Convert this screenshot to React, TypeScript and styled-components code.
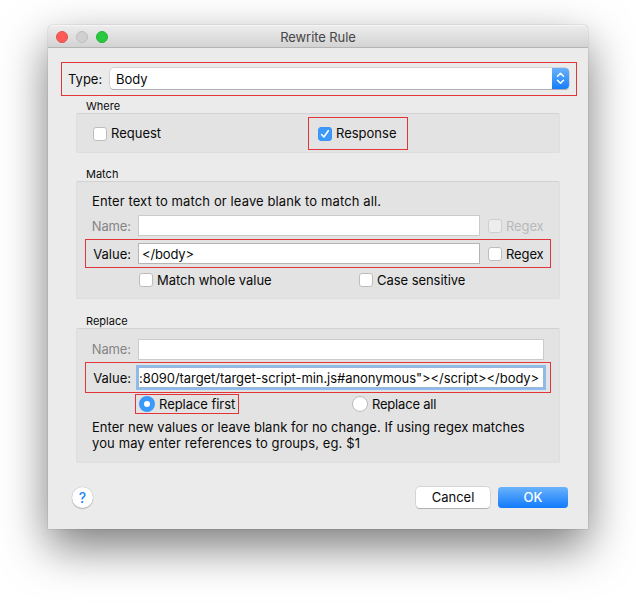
import React from "react";
import styled, { createGlobalStyle } from "styled-components";

const GlobalStyle = createGlobalStyle`
  * { box-sizing: border-box; }
  body { margin: 0; background: #fff; overflow: hidden; }
`;

const Desktop = styled.main`
  width: 636px;
  height: 603px;
  padding: 25px 48px 0;
  overflow: hidden;
  background: #fff;
  color: #0a0a0a;
  font: 13px/16px Inter, Roboto, sans-serif;
`;

const Window = styled.section`
  width: 540px;
  height: 504px;
  display: flex;
  flex-direction: column;
  background: #ebebeb;
  border-radius: 5px 5px 0 0;
  box-shadow: 0 0 1px rgba(0, 0, 0, 0.55), 0 18px 46px rgba(0, 0, 0, 0.52);
`;

const TitleBar = styled.header`
  height: 23px;
  flex: none;
  display: grid;
  grid-template-columns: 70px 1fr 70px;
  align-items: center;
  padding: 1px 0 0 8px;
  background: linear-gradient(#ececec, #d3d3d3);
  border-top: 1px solid #f6f6f6;
  border-bottom: 1px solid #b4b4b4;
  border-radius: 5px 5px 0 0;
`;

const Lights = styled.div`
  display: flex;
  gap: 8px;
`;

const Light = styled.span<{ $fill: string; $edge: string }>`
  width: 12px;
  height: 12px;
  border-radius: 50%;
  background: ${(p) => p.$fill};
  border: 1px solid ${(p) => p.$edge};
`;

const Text = styled.span<{ $track?: number; $dim?: string }>`
  white-space: nowrap;
  letter-spacing: ${(p) => p.$track ?? 0}px;
  color: ${(p) => p.$dim ?? "inherit"};
`;

const Title = styled.h1`
  margin: 0;
  padding-right: 8px;
  text-align: center;
  font-size: 13px;
  font-weight: 400;
  line-height: 16px;
  color: #464646;
`;

const TypeRow = styled.div`
  flex: none;
  width: 516px;
  height: 34px;
  margin: 14px 0 0 13px;
  padding: 0 7px 1px 6px;
  display: flex;
  align-items: center;
  justify-content: space-between;
  border: 1px solid #e2353a;
`;

const Select = styled.div`
  width: 459px;
  height: 21px;
  display: flex;
  align-items: center;
  justify-content: space-between;
  padding-left: 6px;
  background: #fff;
  border-radius: 4px;
  box-shadow: 0 0 0 0.5px #bcbcbc, 0 1px 0.5px #a3a3a3;
`;

const Stepper = styled.span`
  width: 17px;
  height: 21px;
  display: flex;
  align-items: center;
  justify-content: center;
  background: linear-gradient(#68b1fb, #157efb);
  border-radius: 0 4px 4px 0;
`;

const GroupTitle = styled.h2<{ $top: number }>`
  flex: none;
  height: 14px;
  margin: ${(p) => p.$top}px 0 0 38px;
  font-size: 11px;
  font-weight: 400;
  line-height: 14px;
`;

const Group = styled.div<{ $height: number }>`
  flex: none;
  width: 484px;
  height: ${(p) => p.$height}px;
  margin-left: 28px;
  background: #e3e3e3;
  border: 1px solid #dedede;
  border-top-color: #d2d2d2;
  border-radius: 2px;
`;

const WhereRow = styled.div`
  display: grid;
  grid-template-columns: 231px 100px;
  align-items: center;
  padding-top: 3px;

  ${Text} {
    padding-bottom: 2px;
  }
`;

const Option = styled.label<{ $gap?: number; $pad?: number }>`
  display: flex;
  align-items: center;
  gap: ${(p) => p.$gap ?? 4}px;
  padding-left: ${(p) => p.$pad ?? 0}px;
`;

const FramedOption = styled(Option)<{ $w: number; $h: number }>`
  width: ${(p) => p.$w}px;
  height: ${(p) => p.$h}px;
  border: 1px solid #e2353a;
`;

const Box = styled.span<{ $on?: boolean; $off?: boolean }>`
  width: 14px;
  height: 14px;
  flex: none;
  display: flex;
  border-radius: 3px;
  background: ${(p) => (p.$on ? "#3b99fc" : p.$off ? "#ededed" : "#fff")};
  border: 1px solid ${(p) => (p.$on ? "#3b93f5" : p.$off ? "#cfcfcf" : "#bdbdbd")};
`;

const Radio = styled.span<{ $on?: boolean }>`
  width: 16px;
  height: 16px;
  flex: none;
  border-radius: 50%;
  background: #fff;
  border: ${(p) => (p.$on ? "5px solid #3b99fc" : "1px solid #bdbdbd")};
`;

const Note = styled.p<{ $top: number }>`
  margin: 0;
  padding: ${(p) => p.$top}px 0 0 15px;
  line-height: 16px;
`;

const FieldRow = styled.div<{ $h: number; $top?: number; $framed?: boolean }>`
  width: 466px;
  height: ${(p) => p.$h}px;
  margin: ${(p) => p.$top ?? 0}px 0 0 8px;
  display: grid;
  grid-template-columns: 45px auto 1fr;
  column-gap: 7px;
  align-items: center;
  border: 1px solid ${(p) => (p.$framed ? "#e2353a" : "transparent")};
`;

const FieldLabel = styled(Text)`
  justify-self: end;
`;

const Field = styled.div<{ $w: number; $focus?: boolean; $dim?: boolean }>`
  width: ${(p) => p.$w}px;
  height: 21px;
  padding: 1px 3px 0;
  background: #fff;
  line-height: 18px;
  border: 1px solid ${(p) => (p.$focus ? "#9cb7d6" : p.$dim ? "#cbcbcb" : "#b4b4b4")};
  box-shadow: ${(p) => (p.$focus ? "0 0 0 2px #8dbcec" : "none")};
`;

const Focused = styled(Field)`
  padding: 1px 0 0;
`;

const Choices = styled.div<{ $cols: string; $left: number; $top: number }>`
  display: grid;
  grid-template-columns: ${(p) => p.$cols};
  align-items: center;
  margin: ${(p) => p.$top}px 0 0 ${(p) => p.$left}px;
`;

const Footer = styled.footer`
  display: flex;
  align-items: center;
  padding: 24px 20px 0 24px;
`;

const Help = styled.button`
  width: 21px;
  height: 21px;
  padding: 0;
  margin: -1px auto 0 0;
  border: 0;
  border-radius: 50%;
  background: #fff;
  box-shadow: 0 0 1px #999, 0 1px 1px #b5b5b5;
  color: #1a86fb;
  font: 500 14px/21px Inter, sans-serif;
`;

const Button = styled.button<{ $primary?: boolean }>`
  width: ${(p) => (p.$primary ? 70 : 74)}px;
  height: 21px;
  padding: 0;
  margin-left: 8px;
  border: 0;
  border-radius: 4px;
  font: ${(p) => (p.$primary ? 500 : 400)} 13px/21px Inter, sans-serif;
  color: ${(p) => (p.$primary ? "#fff" : "#0a0a0a")};
  background: ${(p) => (p.$primary ? "linear-gradient(#6ab3fb, #117afc)" : "#fff")};
  box-shadow: ${(p) => (p.$primary ? "0 0 0.5px #3b86dd" : "0 0 0 0.5px #bebebe, 0 1px 0.5px #a8a8a8")};
`;

export default function App() {
  return (
    <>
      <GlobalStyle />
      <Desktop>
        <Window>
          <TitleBar>
            <Lights>
              <Light $fill="#fc5b57" $edge="#e4504b" />
              <Light $fill="#d0d0d0" $edge="#bfbfbf" />
              <Light $fill="#28c840" $edge="#20b432" />
            </Lights>
            <Title><Text $track={-0.08}>Rewrite Rule</Text></Title>
          </TitleBar>

          <TypeRow>
            <Text>Type:</Text>
            <Select>
              <Text>Body</Text>
              <Stepper>
                <svg width="9" height="13" viewBox="0 0 9 13" fill="none" stroke="#fff" strokeWidth="1.5" strokeLinecap="round" strokeLinejoin="round">
                  <path d="M1.5 4.3 4.5 1.3 7.5 4.3M1.5 8.3 4.5 11.3 7.5 8.3" />
                </svg>
              </Stepper>
            </Select>
          </TypeRow>

          <GroupTitle $top={3}><Text>Where</Text></GroupTitle>
          <Group $height={40}>
            <WhereRow>
              <Option $pad={16}><Box /><Text>Request</Text></Option>
              <FramedOption $w={100} $h={33} $pad={9}>
                <Box $on>
                  <svg width="12" height="12" viewBox="0 0 12 12" fill="none" stroke="#fff" strokeWidth="1.6" strokeLinecap="round" strokeLinejoin="round">
                    <path d="M2.6 6.5 4.9 9 9.3 2.7" />
                  </svg>
                </Box>
                <Text>Response</Text>
              </FramedOption>
            </WhereRow>
          </Group>

          <GroupTitle $top={14}><Text>Match</Text></GroupTitle>
          <Group $height={118}>
            <Note $top={11}><Text $track={0.115}>Enter text to match or leave blank to match all.</Text></Note>
            <FieldRow $h={27} $top={3}>
              <FieldLabel $dim="#858585" $track={-0.1}>Name:</FieldLabel>
              <Field $w={342} $dim />
              <Option $pad={1}><Box $off /><Text $dim="#b9b9b9" $track={-0.1}>Regex</Text></Option>
            </FieldRow>
            <FieldRow $h={29} $framed>
              <FieldLabel>Value:</FieldLabel>
              <Field $w={342}><Text $track={-0.15}>&lt;/body&gt;</Text></Field>
              <Option $pad={1}><Box /><Text $track={-0.1}>Regex</Text></Option>
            </FieldRow>
            <Choices $cols="220px 1fr" $left={62} $top={4}>
              <Option><Box /><Text $track={-0.05}>Match whole value</Text></Option>
              <Option><Box /><Text $track={-0.05}>Case sensitive</Text></Option>
            </Choices>
          </Group>

          <GroupTitle $top={15}><Text>Replace</Text></GroupTitle>
          <Group $height={135}>
            <Choices $cols="1fr" $left={0} $top={7}>
              <FieldRow $h={26}>
                <FieldLabel $dim="#858585" $track={-0.1}>Name:</FieldLabel>
                <Field $w={406} $dim />
              </FieldRow>
              <FieldRow $h={31} $framed>
                <FieldLabel>Value:</FieldLabel>
                <Focused $w={406} $focus>
                  <Text $track={-0.06}>:8090/target/target-script-min.js#anonymous"&gt;&lt;/script&gt;&lt;/body&gt;</Text>
                </Focused>
              </FieldRow>
            </Choices>
            <Choices $cols="217px 1fr" $left={58} $top={1}>
              <FramedOption $w={104} $h={20} $pad={3}>
                <Radio $on /><Text $track={-0.05}>Replace first</Text>
              </FramedOption>
              <Option><Radio /><Text $track={-0.2}>Replace all</Text></Option>
            </Choices>
            <Note $top={5}>
              <Text $track={0.03}>Enter new values or leave blank for no change. If using regex matches</Text>
              <br />
              <Text $track={0.11}>you may enter references to groups, eg. $1</Text>
            </Note>
          </Group>

          <Footer>
            <Help aria-label="Help">?</Help>
            <Button>Cancel</Button>
            <Button $primary>OK</Button>
          </Footer>
        </Window>
      </Desktop>
    </>
  );
}
